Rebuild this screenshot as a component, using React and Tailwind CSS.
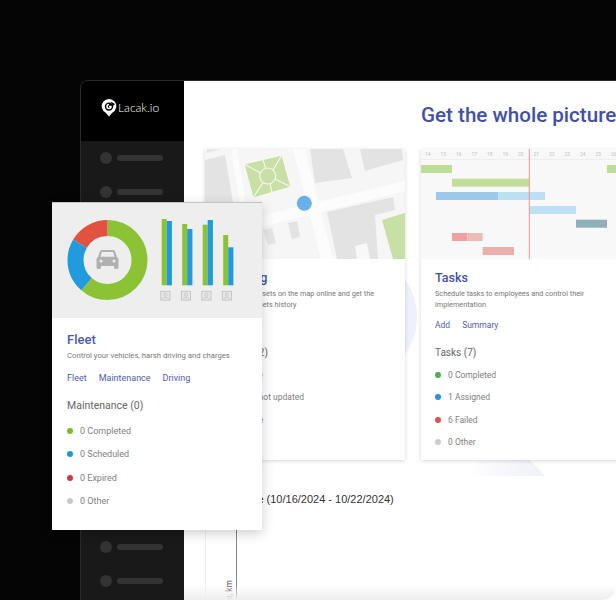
import React from 'react';

const bars = [
  { x: 110, g: 219, b: 221 },
  { x: 130.5, g: 224, b: 229 },
  { x: 151, g: 224.7, b: 220 },
  { x: 171.5, g: 235, b: 247.3 },
];

const fleetRows = [
  ['bg-[#76c01f]', '0 Completed'],
  ['bg-[#1a9ad6]', '0 Scheduled'],
  ['bg-[#d9343f]', '0 Expired'],
  ['bg-[#c8c8c8]', '0 Other'],
];

const taskRows = [
  ['bg-[#4caf50]', '0 Completed'],
  ['bg-[#2a8fdc]', '1 Assigned'],
  ['bg-[#e85050]', '6 Failed'],
  ['bg-[#cccccc]', '0 Other'],
];

const trackingRows = [
  ['bg-[#4caf50]', '0 Online'],
  ['bg-[#2a8fdc]', '1 Data not updated'],
  ['bg-[#e85050]', '1 Offline'],
  ['bg-[#cccccc]', '0 Other'],
];

const days = [14, 15, 16, 17, 18, 19, 20, 21, 22, 23, 24, 25, 26];

const NavItem = () => (
  <div className="flex items-center gap-[5px] pl-[19px] h-[12px]">
    <div className="w-[12px] h-[12px] rounded-full bg-[#333333]" />
    <div className="w-[46px] h-[6px] rounded-full bg-[#333333]" />
  </div>
);

const Logo = () => (
  <svg width="16" height="18" viewBox="0 0 16 18" className="shrink-0">
    <path d="M8 17.5 L5 14 A7.3 7.3 0 1 1 11 14 Z" fill="#ffffff" />
    <circle cx="8" cy="7.6" r="4.2" fill="#000000" />
    <path d="M8 5.6 A2 2 0 1 0 10 7.6 H8" fill="none" stroke="#ffffff" strokeWidth="1.5" />
    <path d="M9.5 2.5 L14 5 L12 7 Z" fill="#000000" />
  </svg>
);

const MapPicture = () => (
  <svg width="200" height="110" viewBox="0 0 200 110" className="block">
    <rect width="200" height="110" fill="#f6f6f6" />
    <path d="M0 80 L200 32 L200 42 L0 92 Z" fill="#fcfcfc" />
    <path d="M88 0 L100 0 L128 110 L116 110 Z" fill="#fcfcfc" />
    <path d="M26 0 L32 0 L50 110 L44 110 Z" fill="#fcfcfc" />
    <path d="M105 0 L138 0 L147 29 L110 34 Z" fill="#e3e3e3" />
    <path d="M155 0 L197 0 L198 11 L160 22 Z" fill="#e3e3e3" />
    <path d="M0 11 L20 6 L28 53 L0 53 Z" fill="#e3e3e3" />
    <path d="M2 0 L16 0 L2 4 Z" fill="#e6e6e6" />
    <path d="M122 63 L188 48 L190 61 L170 66 L173 110 L132 110 Z" fill="#e3e3e3" />
    <path d="M150 97 L162 94 L165 110 L152 110 Z" fill="#f8f8f8" />
    <path d="M177 71 L200 64 L200 110 L188 110 Z" fill="#c8dfa5" />
    <path d="M83 74 L92 72 L95 88 L87 90 Z" fill="#e3e3e3" />
    <path d="M58 81 L67 79 L71 94 L63 96 Z" fill="#e6e6e6" />
    <path d="M39 15 L77 6 L86 38 L48 49 Z" fill="#c8dfa5" />
    <g stroke="#f7f9f0" strokeWidth="1.1" fill="none">
      <path d="M39 15 L77 6 L86 38 L48 49 Z" />
      <path d="M39 15 L55.5 24" />
      <path d="M77 6 L68 21" />
      <path d="M86 38 L70 30" />
      <path d="M48 49 L58 33.5" />
      <path d="M58 10.5 L60.5 19" />
      <path d="M65 35 L67 43.5" />
      <circle cx="62.7" cy="27" r="8" />
    </g>
    <circle cx="99.3" cy="54.3" r="7.5" fill="#6ab0e8" />
  </svg>
);

const GanttPicture = () => (
  <svg width="200" height="110" viewBox="0 0 200 110" className="block">
    <rect width="200" height="110" fill="#f8f8f8" />
    <path d="M0 10.5 H200" stroke="#eeeeee" strokeWidth="1" />
    {days.map((d, i) => (
      <text key={d} x={6.7 + i * 15.5} y="7" fontSize="5" fill="#c4c4c4" textAnchor="middle" fontFamily="Roboto, sans-serif">
        {d}
      </text>
    ))}
    <rect x="0" y="16" width="31" height="8" fill="#bcdc97" />
    <rect x="186" y="16" width="14" height="8" fill="#bcdc97" />
    <rect x="31" y="29.7" width="77" height="8" fill="#c2de9b" />
    <rect x="15" y="43" width="62.3" height="8" fill="#9cc9ea" />
    <rect x="77.3" y="43" width="46.7" height="8" fill="#bbdff3" />
    <rect x="109" y="57" width="46" height="8" fill="#bde0f5" />
    <rect x="155" y="70.7" width="31" height="8" fill="#8fb0b8" />
    <rect x="31" y="84" width="15.3" height="8" fill="#f0a0a0" />
    <rect x="46.3" y="84" width="15.4" height="8" fill="#eebcb8" />
    <rect x="61.7" y="98" width="31.3" height="8" fill="#ebb0ac" />
    <rect x="107.8" y="0" width="1" height="110" fill="#ee8f8f" />
  </svg>
);

const FleetPicture = () => (
  <svg width="210" height="115" viewBox="0 0 210 115" className="block">
    <rect width="210" height="115" fill="#eeeeee" />
    <g fill="none" strokeWidth="16" transform="rotate(-90 55.5 57)">
      <circle cx="55.5" cy="57" r="32" stroke="#8cc334" pathLength="360" strokeDasharray="221 360" />
      <circle cx="55.5" cy="57" r="32" stroke="#219ade" pathLength="360" strokeDasharray="80 360" strokeDashoffset="-221" />
      <circle cx="55.5" cy="57" r="32" stroke="#e2533f" pathLength="360" strokeDasharray="59 360" strokeDashoffset="-301" />
    </g>
    {/* car */}
    <g fill="#b0b0b0">
      <path d="M47.5 49.5 C48 47.5 49 47 50.5 47 H60.5 C62 47 63 47.5 63.5 49.5 L65 54 C66 54.8 66.5 55.5 66.5 57 V64 C66.5 65.3 66 66 64.8 66 H63.7 C62.5 66 62 65.3 62 64 V63 H49 V64 C49 65.3 48.5 66 47.3 66 H46.2 C45 66 44.5 65.3 44.5 64 V57 C44.5 55.5 45 54.8 46 54 Z" />
      <path d="M50 49 H61 L62.5 53.8 H48.5 Z" fill="#eeeeee" />
      <circle cx="49" cy="58" r="1.5" fill="#eeeeee" />
      <circle cx="62" cy="58" r="1.5" fill="#eeeeee" />
    </g>
    {bars.map((bar) => (
      <g key={bar.x}>
        <rect x={bar.x - 0.3} y={bar.g - 203} width="5" height={285.3 - bar.g} fill="#8cc334" />
        <rect x={bar.x + 4.7} y={bar.b - 203} width="5.2" height={285.3 - bar.b} fill="#219ade" />
        <g transform={`translate(${bar.x - 1.2} 88.3)`} fill="none" stroke="#bcbcbc">
          <rect x="0" y="0" width="9.2" height="8.8" fill="#e8e8e8" strokeWidth="0.8" />
          <circle cx="4.6" cy="3.4" r="1.6" strokeWidth="0.7" />
          <path d="M1.4 7.6 C2 5.8 7.2 5.8 7.8 7.6" strokeWidth="0.7" />
        </g>
      </g>
    ))}
  </svg>
);

const StatRow = ({ dot, label }) => (
  <div className="flex items-center gap-[7px]">
    <span className={`w-[6px] h-[6px] rounded-full ${dot}`} />
    <span>{label}</span>
  </div>
);

const Card = ({ picture, title, desc, links, heading, rows }) => (
  <div className="w-[200px] shrink-0 h-[311px] bg-white shadow-[0_1px_4px_rgba(0,0,0,0.16)] font-['Roboto',sans-serif]">
    {picture}
    <div className="px-[14px]">
      <h3 className="mt-[11px] text-[12.5px] leading-[15px] font-medium text-[#3f51a8]">{title}</h3>
      <p className="mt-[3px] text-[7.3px] leading-[11px] text-[#777777] h-[22px]">{desc}</p>
      <div className="mt-[9px] flex gap-[12px] text-[8.5px] leading-[12px] text-[#4f5bb0]">
        {links.map((l) => (
          <span key={l}>{l}</span>
        ))}
      </div>
      <div className="mt-[15px] text-[10px] leading-[14px] text-[#666666]">{heading}</div>
      <div className="mt-[9px] flex flex-col gap-[10.3px] text-[8.5px] leading-[12px] text-[#808080]">
        {rows.map(([dot, label]) => (
          <StatRow key={label} dot={dot} label={label} />
        ))}
      </div>
    </div>
  </div>
);

export default function App() {
  return (
    <div className="relative w-[616px] h-[600px] overflow-hidden bg-[#050505] pt-[80px] pl-[80px]">
      {/* app window */}
      <div className="flex w-[536px] h-[520px] rounded-tl-[8px] overflow-hidden border-l border-t border-[#2a2a2a]">
        <aside className="w-[103px] shrink-0 flex flex-col bg-[#191919]">
          <div className="h-[60px] shrink-0 bg-black flex items-center gap-[1px] pl-[20px] pb-[6px]">
            <Logo />
            <span className="font-['Lato',sans-serif] font-light text-[12px] text-white">Lacak.io</span>
          </div>
          <div className="pt-[11px] flex flex-col gap-[22px]">
            {Array.from({ length: 9 }, (_, i) => (
              <NavItem key={i} />
            ))}
            <div className="mt-[15px] flex flex-col gap-[22px]">
              {Array.from({ length: 4 }, (_, i) => (
                <NavItem key={i} />
              ))}
            </div>
          </div>
        </aside>

        <main className="relative flex-1 bg-white min-w-0">
          {/* faint shapes behind the cards */}
          <svg width="432" height="519" className="absolute left-0 top-0">
            <defs>
              <linearGradient id="fade" x1="0" x2="1" y1="0" y2="0">
                <stop offset="0" stopColor="#ffffff" />
                <stop offset="1" stopColor="#eff0fa" />
              </linearGradient>
            </defs>
            <circle cx="168" cy="236" r="65" fill="#eef0fb" />
            <path d="M279 395 L296 379 H346 L361 395 Z" fill="url(#fade)" />
          </svg>

          <div className="relative flex flex-col">
            <h1 className="pt-[21px] pl-[237px] whitespace-nowrap font-['Roboto',sans-serif] font-medium text-[20.6px] leading-[26px] text-[#3f51a8]">
              Get the whole picture
            </h1>
            <div className="mt-[21px] ml-[21px] flex gap-[16px]">
              <Card
                picture={<MapPicture />}
                title="Tracking"
                desc={
                  <>
                    Track your assets on the map online and get the
                    <br />
                    complete assets history
                  </>
                }
                links={['Map', 'Log']}
                heading="Objects (2)"
                rows={trackingRows}
              />
              <Card
                picture={<GanttPicture />}
                title="Tasks"
                desc="Schedule tasks to employees and control their implementation"
                links={['Add', 'Summary']}
                heading="Tasks (7)"
                rows={taskRows}
              />
            </div>
            <div className="ml-[21px] border-l border-[#f0f0f0] h-[140px]">
              <div className="pt-[32px] pl-[19px] font-['Liberation_Sans',sans-serif] text-[11px] leading-[14px] text-[#333333] whitespace-nowrap">
                Mileage (10/16/2024 - 10/22/2024)
              </div>
              <div className="mt-[24px] ml-[17px] h-[80px] flex">
                <div className="w-[13px] flex items-start justify-center pt-[50px]">
                  <span className="[writing-mode:vertical-rl] rotate-180 font-['Roboto',sans-serif] text-[8.5px] text-[#555555] whitespace-nowrap">
                    Mileage, km
                  </span>
                </div>
                <div className="border-l border-[#888888] h-full" />
              </div>
            </div>
          </div>
          {/* soft fade at the window's bottom edge */}
          <div className="absolute left-0 right-0 bottom-0 h-[16px] rounded-br-[14px] bg-gradient-to-b from-transparent to-[#eeeeee]" />
        </main>
      </div>

      {/* floating fleet card */}
      <div className="absolute left-[52px] top-[203px] w-[210px] h-[327px] bg-white shadow-[0_-1px_0_#c4c4c4,0_3px_12px_rgba(0,0,0,0.2)] font-['Roboto',sans-serif]">
        <FleetPicture />
        <div className="px-[15px]">
          <h3 className="mt-[14px] text-[13px] leading-[16px] font-medium text-[#4f5bb0]">Fleet</h3>
          <p className="mt-[2px] text-[7.7px] leading-[12px] text-[#777777] whitespace-nowrap">
            Control your vehicles, harsh driving and charges
          </p>
          <div className="mt-[10px] flex gap-[12px] text-[9px] leading-[12px] text-[#4f5bb0]">
            <span>Fleet</span>
            <span>Maintenance</span>
            <span>Driving</span>
          </div>
          <div className="mt-[15px] text-[10.5px] leading-[14px] text-[#666666]">Maintenance (0)</div>
          <div className="mt-[12px] flex flex-col gap-[11.4px] text-[9px] leading-[12px] text-[#808080]">
            {fleetRows.map(([dot, label]) => (
              <StatRow key={label} dot={dot} label={label} />
            ))}
          </div>
        </div>
      </div>
    </div>
  );
}
